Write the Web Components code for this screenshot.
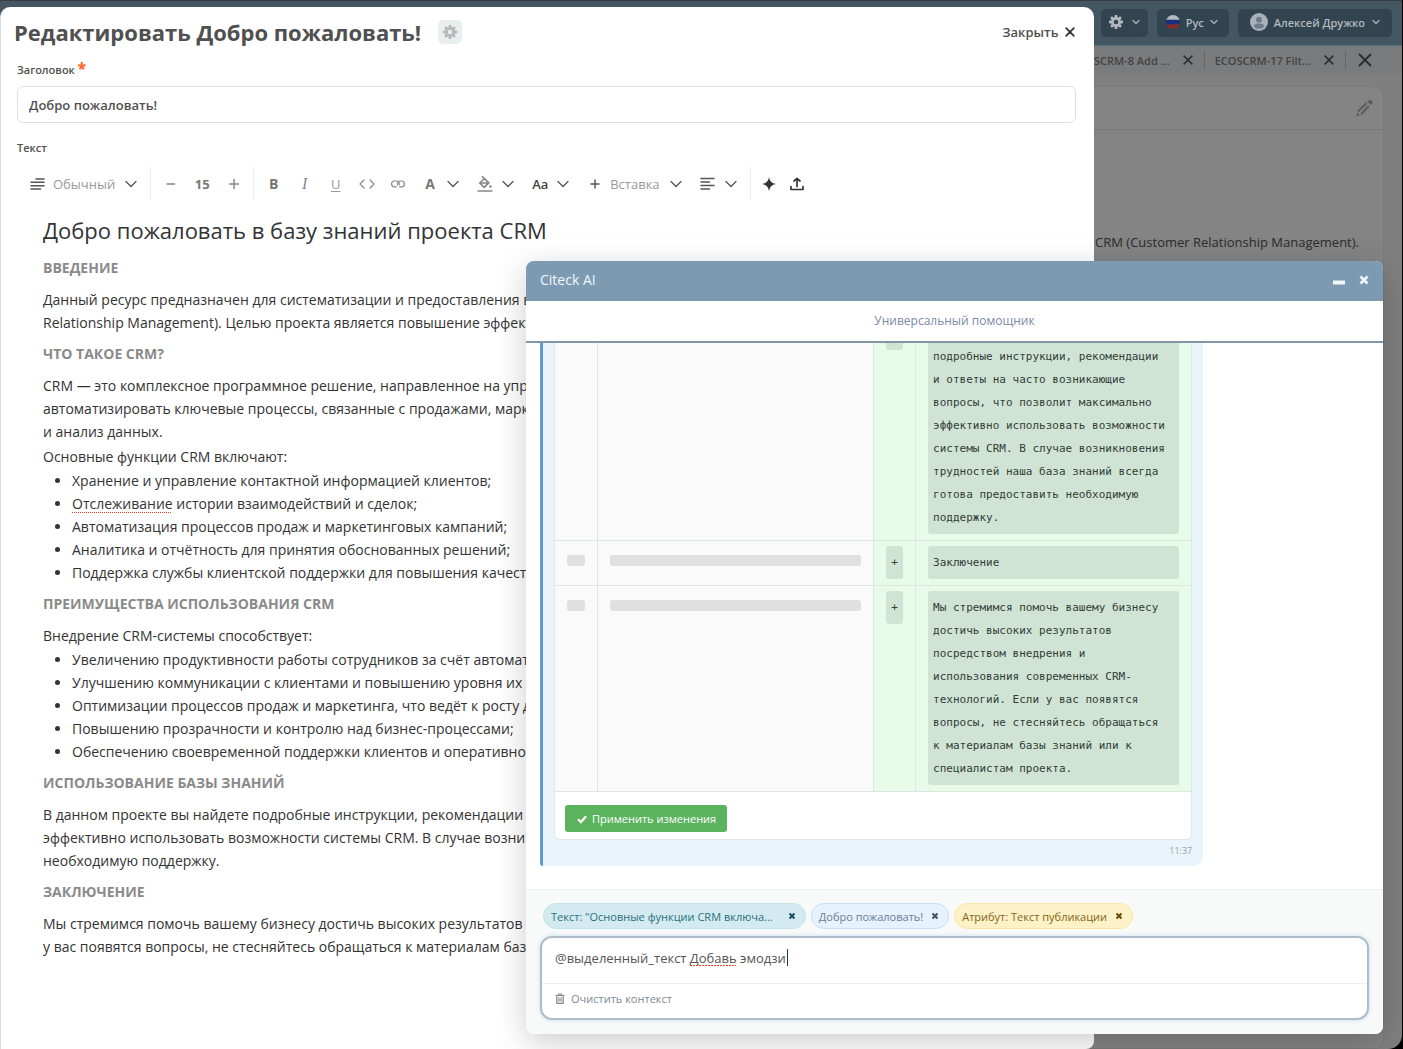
<!DOCTYPE html>
<html lang="ru">
<head>
<meta charset="utf-8">
<title>Citeck</title>
<style>
html{height:100%;background:#000}
body{margin:0;height:100%;overflow:hidden;font-family:"Open Sans",sans-serif;font-size:13px;color:#333}
</style>
</head>
<body>
<app-shell>
  <top-bar slot="top"></top-bar>
  <tab-strip slot="top"></tab-strip>
  <wiki-card>CRM (Customer Relationship Management).</wiki-card>
  <edit-modal slot="layer" heading="Редактировать Добро пожаловать!">
    <form-field label="Заголовок" required value="Добро пожаловать!"></form-field>
    <rich-editor label="Текст"></rich-editor>
  </edit-modal>
  <chat-window slot="layer" heading="Citeck AI" mode="Универсальный помощник">
    <chat-message time="11:37"><diff-card></diff-card></chat-message>
    <context-chip slot="chips" tone="teal">Текст: "Основные функции CRM включа...</context-chip>
    <context-chip slot="chips" tone="blue">Добро пожаловать!</context-chip>
    <context-chip slot="chips" tone="amber">Атрибут: Текст публикации</context-chip>
    <chat-composer slot="composer"></chat-composer>
  </chat-window>
</app-shell>

<script>
const RESET = `*{box-sizing:border-box}button{font:inherit;color:inherit;background:none;border:0;padding:0;margin:0;cursor:pointer;display:inline-flex;align-items:center}`;

function define(name, render) {
  customElements.define(name, class extends HTMLElement {
    connectedCallback() {
      if (this.shadowRoot) return;
      this.attachShadow({mode: 'open'}).innerHTML = render(this);
    }
  });
}

const S = 'fill="none" stroke="currentColor" stroke-linecap="round" stroke-linejoin="round"';
const ICONS = {
  gear: [14, 14, `<g fill="currentColor"><path fill-rule="evenodd" d="M7 2.3a4.7 4.7 0 1 0 0 9.4 4.7 4.7 0 0 0 0-9.4zM7 4.7a2.3 2.3 0 1 1 0 4.6 2.3 2.3 0 0 1 0-4.6z"/><path d="M5.8 0h2.4l.5 3H5.3zM5.8 14h2.4l.5-3H5.3zM0 5.8v2.4l3 .5V5.3zM14 5.8v2.4l-3 .5V5.3z"/><path d="M5.8 0h2.4l.5 3H5.3zM5.8 14h2.4l.5-3H5.3zM0 5.8v2.4l3 .5V5.3zM14 5.8v2.4l-3 .5V5.3z" transform="rotate(45 7 7)"/></g>`],
  down: [8, 6, `<path ${S} stroke-width="1.6" d="M1 1.5l3 3 3-3"/>`],
  chevron: [12, 8, `<path ${S} stroke-width="1.3" d="M1 1.5l5 5 5-5"/>`],
  flag: [14, 14, `<clipPath id="c"><circle cx="7" cy="7" r="7"/></clipPath><g clip-path="url(#c)"><path fill="#b3b9be" d="M0 0h14v5H0z"/><path fill="#1c2f7c" d="M0 4.7h14v4.8H0z"/><path fill="#8f2a2c" d="M0 9.5h14V14H0z"/></g>`],
  user: [18, 18, `<circle cx="9" cy="9" r="9" fill="#a9b2ba"/><circle cx="9" cy="6.8" r="3" fill="#6b7c8c"/><path fill="#6b7c8c" d="M3.6 13.2c1-2 2.600-2.700 3.800-2.700h3.200c1.200 0 2.800.7 3.800 2.700a7 7 0 0 1-10.800 0z"/>`],
  cross: [10, 10, `<path ${S} stroke-width="1.8" d="M1.200 1.200l7.600 7.600M8.800 1.200L1.200 8.800"/>`],
  bigcross: [14, 14, `<path ${S} stroke-width="1.800" d="M1.500 1.500l11 11M12.500 1.500l-11 11"/>`],
  boldcross: [10, 10, `<path fill="none" stroke="currentColor" stroke-width="2.600" d="M1.500 1.500l7 7M8.500 1.500l-7 7"/>`],
  tinycross: [8, 8, `<path fill="none" stroke="currentColor" stroke-width="2" d="M1.500 1.500l5 5M6.500 1.500l-5 5"/>`],
  min: [12, 10, `<path fill="currentColor" d="M0 5.500h12v4H0z"/>`],
  pencil: [18, 18, `<g fill="none" stroke="currentColor" stroke-width="2"><path d="M3 12.500L11.500 4M6 15.200L14 7"/></g><path fill="currentColor" d="M12.500 2.800l1.600-1.600q.9-.8 1.800 0l1.400 1.500q.8.800 0 1.700l-1.600 1.500zM2.200 13.500l2.800 2.700L1 17.300z"/>`],
  para: [16, 14, `<path ${S} stroke-width="1.600" d="M6 2h8M1 5.300h13M1 8.700h13M1 12h9.500"/>`],
  minus: [10, 10, `<path ${S} stroke-width="1.500" d="M1 5h7.500"/>`],
  plus: [12, 12, `<path ${S} stroke-width="1.500" d="M1.500 6h9M6 1.500v9"/>`],
  plus2: [16, 12, `<path ${S} stroke-width="1.500" d="M4 6h8M8 2v8"/>`],
  code: [16, 12, `<path ${S} stroke-width="1.200" d="M5 2L1 6l4 4M11 2l4 4-4 4"/>`],
  link: [16, 10, `<path ${S} stroke-width="1.200" d="M6.300 7.900H4A3 3 0 0 1 4 2h2.500a3 3 0 0 1 2.700 4M9.700 7.900H12A3 3 0 0 0 12 2h-1.500a3 3 0 0 0-2.900 4"/>`],
  bucket: [16, 16, `<path ${S} stroke-width="1.700" d="M5.500.8L7.200 2.500M7.500 2.500l4.300 4.300-4.600 4.600L2.700 7zM3.500 7h8"/><circle cx="13.400" cy="10.500" r="1.200" fill="currentColor"/><path ${S} stroke-width="1.400" d="M1 15h14"/>`],
  align: [16, 14, `<path ${S} stroke-width="1.500" d="M1 1.500h13M1 5h8.500M1 8.500h13M1 12h8.500"/>`],
  spark: [14, 14, `<path fill="currentColor" d="M7 0q.7 6 7 7-6.300 1-7 7-.7-6-7-7 6.300-1 7-7z"/><circle cx="7" cy="7" r="2.600" fill="currentColor"/>`],
  upload: [14, 14, `<path ${S} stroke-width="1.700" d="M1 9.500v3h12v-3M7 9.500V1.500M4 4l3-2.700L10 4"/>`],
  check: [10, 10, `<path fill="none" stroke="currentColor" stroke-width="2.300" d="M1 5.200l2.800 2.800L9.200 2.200"/>`],
  trash: [10, 11, `<path ${S} stroke-width="1.200" d="M1 2.500h8M3.500 2.300V1h3v1.300M1.800 2.800v7.500h6.400V2.800M3.900 4.800v3.500M6.100 4.800v3.500"/>`]
};
define('ui-icon', el => {
  const [w, h, body] = ICONS[el.getAttribute('name')];
  return `<style>:host{display:inline-flex;flex:none}svg{display:block}</style><svg width="${w}" height="${h}" viewBox="0 0 ${w} ${h}" aria-hidden="true">${body}</svg>`;
});

define('app-shell', () => `<style>${RESET}
:host{display:flex;flex-direction:column;position:relative;height:100%;margin-right:1px;background:#7f7f80;border-radius:0 0 14px 0;overflow:hidden;border-top:1px solid #363c40;box-sizing:border-box}
</style><slot name="top"></slot><slot></slot><slot name="layer"></slot>`);

define('top-bar', () => `<style>${RESET}
:host{display:flex;justify-content:flex-end;align-items:center;gap:9px;height:45px;padding-right:10px;background:#435662;border-bottom:1px solid #50707f;box-sizing:border-box;font-size:11px;font-weight:600;color:#b2babf}
button{height:28px;border-radius:5px;background:#31444f;gap:6px;padding:0 9px 2px}
.lang{padding-right:11px}
.user{padding:0 12px 2px 12px}
.gear{gap:9px;padding:0 8px 2px}
.user ui-icon[name=down]{margin-left:1px}
ui-icon[name=down]{color:#9ca7ad}
</style>
<button class="gear" aria-label="Настройки"><ui-icon name="gear"></ui-icon><ui-icon name="down"></ui-icon></button>
<button class="lang"><ui-icon name="flag"></ui-icon>Рус<ui-icon name="down"></ui-icon></button>
<button class="user"><ui-icon name="user"></ui-icon>Алексей Дружко<ui-icon name="down"></ui-icon></button>`);

define('tab-strip', () => `<style>${RESET}
:host{display:flex;justify-content:flex-end;align-items:center;height:28px;padding-right:30px;background:#7a7b7c;font-size:11px;font-weight:600;color:#414344}
.tab{display:flex;align-items:center;gap:13px;height:18px;padding:0 11px 0 10px;border-right:1px solid #676767}
.all{padding-left:12px;color:#2c2c2c}
.tab button{color:#333}
</style>
<div class="tab">ECOSCRM-8 Add ...<button aria-label="Закрыть вкладку"><ui-icon name="cross"></ui-icon></button></div>
<div class="tab">ECOSCRM-17 Filt...<button aria-label="Закрыть вкладку"><ui-icon name="cross"></ui-icon></button></div>
<button class="all" aria-label="Закрыть все вкладки"><ui-icon name="bigcross"></ui-icon></button>`);

define('wiki-card', () => `<style>${RESET}
:host{display:block;flex:1;margin:12px 18px 0;background:#848484;border:1px solid #7b7b7b;border-radius:10px}
header{display:flex;justify-content:flex-end;align-items:center;height:43px;padding-right:10px;border-bottom:1px solid #777;color:#5c5c5c}
p{margin:0;padding:100px 24px 0;text-align:right;line-height:24px;color:#2b2b2b}
</style><header><button aria-label="Редактировать"><ui-icon name="pencil"></ui-icon></button></header><p><slot></slot></p>`);

define('edit-modal', el => `<style>${RESET}
:host{position:absolute;left:0;top:6px;bottom:0;width:78%;background:#fff;border-radius:10px 10px 8px 0;border-left:1px solid #d9dcde;box-sizing:border-box;padding:0 18px 0 16px;display:block}
header{display:flex;align-items:center;height:53px;margin-left:-3px;padding-bottom:3px;color:#505050}
h1{margin:0 17px 0 0;font-size:22px;font-weight:700;line-height:32px}
.gear{width:24px;height:24px;justify-content:center;background:#e9eeef;border-radius:5px;color:#b4b8ba}
.close{margin-left:auto;gap:6px;padding-right:1px;font-weight:600;color:#505050}
.close ui-icon{color:#333}
</style>
<header><h1>${el.getAttribute('heading')}</h1><button class="gear" aria-label="Настройки формы"><ui-icon name="gear"></ui-icon></button>
<button class="close">Закрыть<ui-icon name="cross"></ui-icon></button></header><slot></slot>`);

define('form-field', el => `<style>${RESET}
:host{display:block}
label{display:block;font-size:11px;font-weight:600;line-height:20px;color:#505050}
b{color:#ff6a39;font-size:15px;line-height:1px}
input{display:block;width:100%;height:37px;margin-top:6px;padding:0 11px;border:1px solid #e0e0e0;border-radius:6px;font:600 13px "Open Sans",sans-serif;color:#505050;outline:0}
</style><label for="f">${el.getAttribute('label')} <b>*</b></label><input id="f" value="${el.getAttribute('value')}">`);

define('editor-toolbar', () => `<style>${RESET}
:host{display:flex;align-items:center;height:33px;margin-left:4px;font-size:13px;color:#777;white-space:nowrap}
.drop{padding:0 9px;gap:9px;height:33px}
.drop.text{gap:7px}
.drop>:first-child{width:16px;justify-content:center;text-align:center}
.drop ui-icon{color:#555}
.label{margin-right:3px;color:#999}
.sq{width:31px;height:33px;justify-content:center}
.sm{width:28px;height:33px;justify-content:center;color:#333}
i.bar{width:1px;height:33px;background:#eee;margin:0 4px}
b{font-size:14px}.dark{color:#444;font-weight:600}
input{width:32px;border:0;padding:0;text-align:center;font:700 13px "Open Sans",sans-serif;color:#777;outline:0;background:none}
.it{font:italic 400 16px "Liberation Serif",serif;color:#888}.un{text-decoration:underline;text-underline-offset:2px;color:#999}
.sq ui-icon{color:#888}
.drop.fill>:first-child{color:#888}
</style>
<button class="drop text"><ui-icon name="para"></ui-icon><span class="label">Обычный</span><ui-icon name="chevron"></ui-icon></button>
<i class="bar"></i>
<button class="sq" aria-label="Уменьшить"><ui-icon name="minus"></ui-icon></button><input aria-label="Размер шрифта" value="15"><button class="sq" aria-label="Увеличить"><ui-icon name="plus"></ui-icon></button>
<i class="bar"></i>
<button class="sq"><b>B</b></button><button class="sq"><span class="it">I</span></button><button class="sq"><span class="un">U</span></button><button class="sq" aria-label="Код"><ui-icon name="code"></ui-icon></button><button class="sq" aria-label="Ссылка"><ui-icon name="link"></ui-icon></button>
<button class="drop"><b>A</b><ui-icon name="chevron"></ui-icon></button>
<button class="drop fill" aria-label="Цвет фона"><ui-icon name="bucket"></ui-icon><ui-icon name="chevron"></ui-icon></button>
<button class="drop"><span class="dark">Aa</span><ui-icon name="chevron"></ui-icon></button>
<button class="drop text"><ui-icon name="plus2"></ui-icon><span class="label">Вставка</span><ui-icon name="chevron"></ui-icon></button>
<button class="drop" aria-label="Выравнивание"><ui-icon name="align"></ui-icon><ui-icon name="chevron"></ui-icon></button>
<i class="bar"></i>
<button class="sm" aria-label="ИИ"><ui-icon name="spark"></ui-icon></button><button class="sm" aria-label="Выгрузить"><ui-icon name="upload"></ui-icon></button>`);

define('rich-editor', el => `<style>${RESET}
:host{display:block;margin-top:15px}
.cap{font-size:11px;font-weight:600;line-height:20px;color:#505050;margin-bottom:9px}
article{padding:14px 25px 0 26px;line-height:23px;font-size:14px;color:#333;white-space:nowrap;overflow:hidden}
h1{margin:0;font-size:22px;font-weight:400;line-height:32px;color:#333}
h2{margin:8px 0 9px;font-size:14px;font-weight:700;line-height:23px;color:#8a8a8a}
h1+h2{margin-top:10px}
p{margin:0}p+p{margin-top:2px}
ul{margin:0;padding:1px 0 0 29px}
u{text-decoration:underline dotted #f0402a;text-decoration-thickness:1px;text-underline-offset:3px}
</style>
<div class="cap">${el.getAttribute('label')}</div>
<editor-toolbar></editor-toolbar>
<article>
<h1>Добро пожаловать в базу знаний проекта CRM</h1>
<h2>ВВЕДЕНИЕ</h2>
<p>Данный ресурс предназначен для систематизации и предоставления всей<br>Relationship Management). Целью проекта является повышение эффективности</p>
<h2>ЧТО ТАКОЕ CRM?</h2>
<p>CRM — это комплексное программное решение, направленное на управление<br>автоматизировать ключевые процессы, связанные с продажами, маркетингом<br>и анализ данных.</p>
<p>Основные функции CRM включают:</p>
<ul><li>Хранение и управление контактной информацией клиентов;</li><li><u>Отслеживание</u> истории взаимодействий и сделок;</li><li>Автоматизация процессов продаж и маркетинговых кампаний;</li><li>Аналитика и отчётность для принятия обоснованных решений;</li><li>Поддержка службы клиентской поддержки для повышения качества</li></ul>
<h2>ПРЕИМУЩЕСТВА ИСПОЛЬЗОВАНИЯ CRM</h2>
<p>Внедрение CRM-системы способствует:</p>
<ul><li>Увеличению продуктивности работы сотрудников за счёт автоматизации</li><li>Улучшению коммуникации с клиентами и повышению уровня их удовлетворённости</li><li>Оптимизации процессов продаж и маркетинга, что ведёт к росту доходов</li><li>Повышению прозрачности и контролю над бизнес-процессами;</li><li>Обеспечению своевременной поддержки клиентов и оперативному</li></ul>
<h2>ИСПОЛЬЗОВАНИЕ БАЗЫ ЗНАНИЙ</h2>
<p>В данном проекте вы найдете подробные инструкции, рекомендации и<br>эффективно использовать возможности системы CRM. В случае возникновения<br>необходимую поддержку.</p>
<h2>ЗАКЛЮЧЕНИЕ</h2>
<p>Мы стремимся помочь вашему бизнесу достичь высоких результатов по<br>у вас появятся вопросы, не стесняйтесь обращаться к материалам базы</p>
</article>`);

define('chat-window', el => `<style>${RESET}
:host{position:absolute;right:19px;top:260px;bottom:15px;width:857px;max-width:90%;display:flex;flex-direction:column;background:#fff;border-radius:8px;overflow:hidden;box-shadow:0 8px 32px rgba(0,0,0,.2)}
header{display:flex;align-items:center;height:40px;flex:none;padding:0 14px 3px 14px;background:#7c9ab1;color:#f2f7fa;font-size:14px}
h2{margin:0 auto 0 0;font-size:14px;font-weight:400}
header button+button{margin-left:14px}
.mode{flex:none;height:42px;line-height:39px;text-align:center;font-size:12px;color:#7b8aa6;border-bottom:2px solid #8396a8}
.log{flex:1;min-height:0;overflow:hidden;display:flex;flex-direction:column;justify-content:flex-end;padding:0 14px 23px}
footer{flex:none;background:#f8f9f9;border-top:1px solid #eceeef;padding:13px 14px 14px}
.chips{display:flex;gap:5px;padding:0 3px 7px}
</style>
<header><h2>${el.getAttribute('heading')}</h2><button aria-label="Свернуть"><ui-icon name="min"></ui-icon></button><button aria-label="Закрыть"><ui-icon name="boldcross"></ui-icon></button></header>
<div class="mode">${el.getAttribute('mode')}</div>
<div class="log"><slot></slot></div>
<footer><div class="chips"><slot name="chips"></slot></div><slot name="composer"></slot></footer>`);

define('chat-message', el => `<style>${RESET}
:host{display:block;flex:none;width:80%;background:#e9f4fb;border-left:3px solid #5f9bcc;border-radius:3px 10px 10px 3px;padding:11px 11px 4px;box-sizing:border-box}
time{display:block;text-align:right;font-size:9px;line-height:22px;color:#98a0a8}
</style><slot></slot><time>${el.getAttribute('time')}</time>`);

const ROWS = [
  'В данном проекте вы найдете подробные инструкции, рекомендации и ответы на часто возникающие вопросы, что позволит максимально эффективно использовать возможности системы CRM. В случае возникновения трудностей наша база знаний всегда готова предоставить необходимую поддержку.',
  'Заключение',
  'Мы стремимся помочь вашему бизнесу достичь высоких результатов посредством внедрения и использования современных CRM-технологий. Если у вас появятся вопросы, не стесняйтесь обращаться к материалам базы знаний или к специалистам проекта.'
];
define('diff-card', () => `<style>${RESET}
:host{display:block;background:#fff;border:1px solid #dfe8e8;border-radius:6px;overflow:hidden}
table{width:100%;table-layout:fixed;border-collapse:separate;border-spacing:0;font:11px "DejaVu Sans Mono",monospace;line-height:23px;color:#333d38}
td{vertical-align:top;padding:5px 12px 6px;border-top:1px solid #dfe5e5;background:#fafafa}
td+td{border-left:1px solid #dfe5e5}
tr:last-child td{border-bottom:1px solid #dfe5e5}
.n{width:42px}
td.add{background:#e6fce8}
.add div{background:#cfe4d5;border-radius:3px;padding:5px 10px 5px 5px}
.sign.add div{padding:5px 0;text-align:center}
.blank{height:11px;margin-top:9px;background:#e0e0e0;border-radius:3px}
button{margin:13px 11px 7px 10px;height:27px;padding:0 11px 0 12px;gap:5px;background:#5bb35e;border-radius:3px;color:#fff;font-size:11px;font-weight:500}
</style>
<table><colgroup><col class="n"><col><col class="n"><col></colgroup><tbody>
${ROWS.map(t => `<tr><td><div class="blank"></div></td><td><div class="blank"></div></td><td class="add sign"><div>+</div></td><td class="add"><div>${t}</div></td></tr>`).join('')}
</tbody></table>
<button><ui-icon name="check"></ui-icon>Применить изменения</button>`);

define('context-chip', el => `<style>${RESET}
:host{display:inline-flex;align-items:center;height:26px;padding:0 9px 0 7px;border-radius:13px;border:1px solid;font-size:11px;box-sizing:border-box;gap:8px;white-space:nowrap}
:host([tone=teal]){background:#d3ebf0;border-color:#c3e6ea;color:#2b6f7b;gap:15px}
:host([tone=blue]){background:#e6f2fc;border-color:#c3e0f7;color:#6a7f98}
:host([tone=amber]){background:#fdf1c8;border-color:#fbe6a3;color:#846515}
button{color:#3d5560}
:host([tone=teal]) button{color:#155260}:host([tone=amber]) button{color:#6b4e05}
</style><slot></slot><button aria-label="Убрать"><ui-icon name="tinycross"></ui-icon></button>`);

define('chat-composer', () => `<style>${RESET}
:host{display:block;background:#fff;border:2px solid #adbcc8;border-radius:12px;box-shadow:0 0 4px #c3dff5;overflow:hidden}
input{display:block;width:100%;height:45px;border:0;outline:0;padding:0 13px 6px;font:13px "Open Sans",sans-serif;color:#555;
background:repeating-linear-gradient(90deg,#f0402a 0 2px,#fff 2px 3px) 148px 27px/46px 1px no-repeat,linear-gradient(#333,#333) 245px 11px/1px 17px no-repeat #fff}
div{display:flex;align-items:center;height:35px;border-top:1px solid #eceeef;padding:0 13px 5px}
button{gap:6px;font-size:11px;color:#7d8993}
</style><input aria-label="Сообщение" value="@выделенный_текст Добавь эмодзи" spellcheck="false"><div><button><ui-icon name="trash"></ui-icon>Очистить контекст</button></div>`);
</script>
</body>
</html>
